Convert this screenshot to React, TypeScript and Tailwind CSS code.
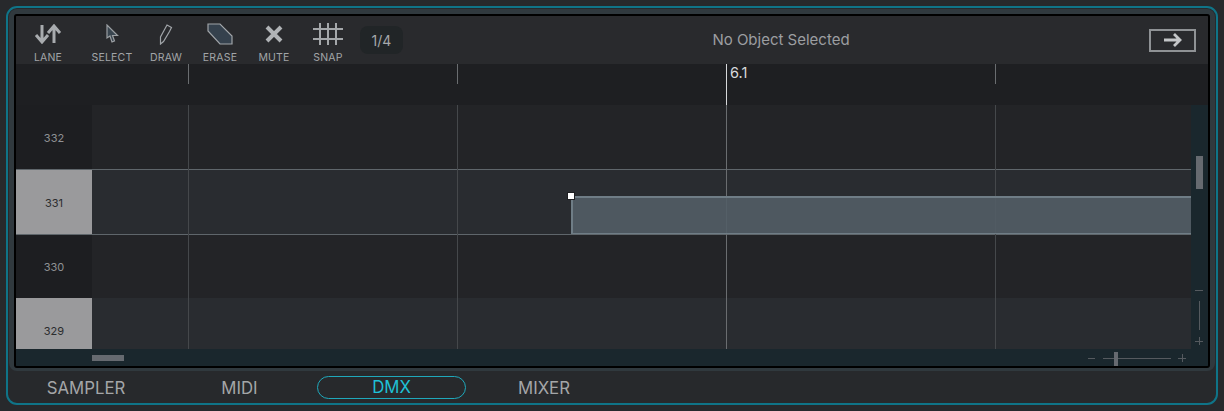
const font = "font-['Inter','Liberation_Sans',sans-serif]";

function ToolButton({ label, width, children }: { label: string; width: string; children: React.ReactNode }) {
  return (
    <div className={`flex flex-col items-center ${width}`}>
      <div className="flex h-[35px] items-center justify-center">{children}</div>
      <span className="text-[10.5px] leading-[13px] tracking-[0.2px] text-[#a2a5a8]">{label}</span>
    </div>
  );
}

function LaneRow({ n, selected, height, bg, highlight }: { n: number; selected?: boolean; height: string; bg: string; highlight?: boolean }) {
  return (
    <div className={`flex ${height} ${highlight ? "border-y border-[#5f666b]" : ""}`}>
      <div
        className={`flex w-[76px] shrink-0 items-center justify-center pt-[2px] text-[11px] ${
          selected ? "bg-[#9a9a9c] text-[#2b2c2e]" : "bg-[#1d1e21] text-[#8f9194]"
        }`}
      >
        {n}
      </div>
      <div className={`flex-1 ${bg}`} />
    </div>
  );
}

export default function App() {
  const lines = ["left-[172px]", "left-[441px]", "left-[979px]"];

  return (
    <div className={`h-[411px] w-[1224px] bg-[#27292c] p-[6px] ${font}`}>
      <div className="flex h-[399px] flex-col rounded-[11px] border-2 border-[#0f7488] px-[1px] pt-[1px]">
        <div className="rounded-[8px] border-[5px] border-b-[3px] border-[#30393e]">
          <div className="flex h-[354px] flex-col overflow-hidden rounded-[3px] border-2 border-black bg-[#1a272d]">
            {/* toolbar */}
            <div className="flex h-[48px] shrink-0 items-center bg-[#292a2d]">
              <div className="flex items-center pl-[7px]">
                <ToolButton label="LANE" width="w-[50px]">
                  <svg width="28" height="20" viewBox="0 0 28 20" fill="none" stroke="#a8abae" strokeWidth="3">
                    <path d="M8 1v16M2 11l6 7 6-7" />
                    <path d="M20 19V3M14 9l6-7 6 7" />
                  </svg>
                </ToolButton>
                <ToolButton label="SELECT" width="w-[64px] ml-[7px]">
                  <svg width="14" height="20" viewBox="0 0 14 20" fill="#3a4650" stroke="#9b9fa3" strokeWidth="1.2">
                    <path d="M2 1v13l3-2 2 6 2.500-1-2-5.500h5z" />
                  </svg>
                </ToolButton>
                <ToolButton label="DRAW" width="w-[44px]">
                  <svg width="16" height="22" viewBox="0 0 16 22" fill="none" stroke="#a0a4a8" strokeWidth="1.2">
                    <path d="M2.500 21l0-7L9 2l4.500 2.500-2 4-6 10z" />
                  </svg>
                </ToolButton>
                <ToolButton label="ERASE" width="w-[50px] ml-[7px]">
                  <svg width="28" height="22" viewBox="0 0 28 22" fill="#35414d" stroke="#a0a4a8" strokeWidth="1.2">
                    <path d="M2 1h12l12 12v8H14L2 8z" />
                  </svg>
                </ToolButton>
                <ToolButton label="MUTE" width="w-[44px] ml-[7px]">
                  <svg width="20" height="20" viewBox="0 0 20 20" fill="none" stroke="#b0b3b6" strokeWidth="4">
                    <path d="M3 3l14 14M17 3L3 17" />
                  </svg>
                </ToolButton>
                <ToolButton label="SNAP" width="w-[44px] ml-[10px]">
                  <svg width="32" height="24" viewBox="0 0 32 24" fill="none" stroke="#a4a7aa" strokeWidth="2">
                    <path d="M8 1v22M16 1v22M24 1v22M1 7h30M1 17h30" />
                  </svg>
                </ToolButton>
                <div className="ml-[10px] flex h-[28px] w-[43px] items-center justify-center rounded-[8px] bg-[#212527] text-[14px] text-[#a6a8aa]">
                  1/4
                </div>
              </div>
              <div className="flex-1 pl-[10px] pt-[1px] text-center text-[15px] text-[#9c9ea1]">No Object Selected</div>
              <div className="mr-[12px] flex h-[23px] w-[47px] items-center justify-center border-2 border-[#8f9295]">
                <svg width="18" height="14" viewBox="0 0 18 14" fill="none" stroke="#c4c6c8" strokeWidth="2.8">
                  <path d="M0 7h16M10 1l6 6-6 6" />
                </svg>
              </div>
            </div>

            {/* ruler */}
            <div className="relative h-[41px] shrink-0 bg-[#1e1f22]">
              <div className="absolute left-[172px] top-0 h-[20px] w-px bg-[#6a6d70]" />
              <div className="absolute left-[441px] top-0 h-[20px] w-px bg-[#6a6d70]" />
              <div className="absolute left-[710px] top-0 h-[41px] w-px bg-[#d6d8da]" />
              <div className="absolute left-[979px] top-0 h-[20px] w-px bg-[#6a6d70]" />
              <span className="absolute left-[714px] top-0 text-[14.5px] leading-[17px] text-[#d8dadc]">6.1</span>
            </div>

            {/* grid */}
            <div className="relative flex h-[244px] shrink-0">
              <div className="flex flex-1 flex-col overflow-hidden">
                <LaneRow n={332} height="h-[64px]" bg="bg-[#232427]" />
                <LaneRow n={331} selected height="h-[66px]" bg="bg-[#292c30]" highlight />
                <LaneRow n={330} height="h-[63px]" bg="bg-[#232427]" />
                <div className="flex h-[51px]">
                  <div className="flex w-[76px] shrink-0 items-end justify-center bg-[#9a9a9c] pb-[10px] text-[11px] text-[#2b2c2e]">329</div>
                  <div className="flex-1 bg-[#292c30]" />
                </div>
              </div>
              <div className="relative w-[17px] shrink-0 bg-[#1a272d]">
                <div className="absolute left-[5px] top-[51px] h-[33px] w-[7px] bg-[#666a70]" />
                <div className="absolute left-[4px] top-[185px] h-px w-[8px] bg-[#555a5f]" />
                <div className="absolute left-[8px] top-[196px] h-[29px] w-px bg-[#555a5f]" />
                <div className="absolute left-[4px] top-[236px] h-px w-[8px] bg-[#555a5f]" />
                <div className="absolute left-[8px] top-[232px] h-[8px] w-px bg-[#555a5f]" />
              </div>

              {lines.map((pos) => (
                <div key={pos} className={`absolute top-0 h-full w-px bg-[#45484b] ${pos}`} />
              ))}
              <div className="absolute left-[710px] top-0 h-full w-px bg-[#6a6d70]" />

              {/* note */}
              <div className="absolute left-[555px] top-[91px] h-[38px] w-[620px] border-l-2 border-t-2 border-b border-[#6f7d86] bg-[#525d66]/90" />
              <div className="absolute left-[551px] top-[87px] h-[8px] w-[8px] border border-[#1d1e21] bg-white" />
            </div>

            {/* bottom scroll strip */}
            <div className="relative flex-1 bg-[#1a272d]">
              <div className="absolute left-[76px] top-[6px] h-[6px] w-[32px] bg-[#666a70]" />
              <div className="absolute left-[1072px] top-[9px] h-px w-[7px] bg-[#555a5f]" />
              <div className="absolute left-[1087px] top-[9px] h-px w-[68px] bg-[#555a5f]" />
              <div className="absolute left-[1098px] top-[3px] h-[14px] w-[4px] bg-[#666a70]" />
              <div className="absolute left-[1162px] top-[9px] h-px w-[8px] bg-[#555a5f]" />
              <div className="absolute left-[1166px] top-[5px] h-[8px] w-px bg-[#555a5f]" />
            </div>
          </div>
        </div>

        {/* tabs */}
        <div className="flex flex-1 items-center pt-[1px] text-[16.8px] text-[#a4a6a8]">
          <div className="w-[154px] pt-[2px] text-center">SAMPLER</div>
          <div className="w-[153px] pt-[2px] text-center">MIDI</div>
          <div className="ml-[1px] flex h-[23px] w-[149px] items-center justify-center rounded-full border-[1.5px] border-[#1fa8bb] pt-[1px] text-[#1fc0d6]">
            DMX
          </div>
          <div className="ml-[2px] w-[152px] pt-[2px] text-center">MIXER</div>
        </div>
      </div>
    </div>
  );
}
